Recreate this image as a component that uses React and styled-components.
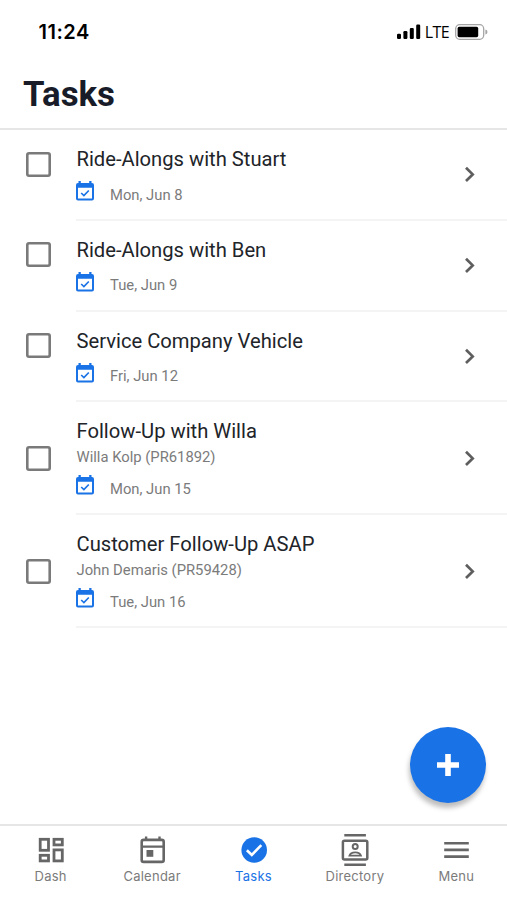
import React, { useState } from 'react'
import styled, { createGlobalStyle } from 'styled-components'

const colors = {
    blue: '#1a73e6',
    title: '#212429',
    heading: '#181c28',
    muted: '#7b7b7b',
    icon: '#666666',
    line: '#e6e6e6',
    rowLine: '#f4f4f4'
}

const tasks = [
    { id: 1, title: 'Ride-Alongs with Stuart', date: 'Mon, Jun 8' },
    { id: 2, title: 'Ride-Alongs with Ben', date: 'Tue, Jun 9' },
    { id: 3, title: 'Service Company Vehicle', date: 'Fri, Jun 12' },
    { id: 4, title: 'Follow-Up with Willa', contact: 'Willa Kolp (PR61892)', date: 'Mon, Jun 15' },
    { id: 5, title: 'Customer Follow-Up ASAP', contact: 'John Demaris (PR59428)', date: 'Tue, Jun 16' }
]

// status bar icons
const SignalIcon = () => (
    <svg width="24" height="16" viewBox="0 0 24 16" fill="#000">
        <rect x="0" y="9.7" width="4" height="5.3" rx="1.2" />
        <rect x="6.4" y="7" width="4" height="8" rx="1.2" />
        <rect x="12.8" y="3.9" width="4" height="11.1" rx="1.2" />
        <rect x="19.2" y="0.5" width="4" height="14.5" rx="1.2" />
    </svg>
)

const BatteryIcon = () => (
    <svg width="33" height="16" viewBox="0 0 33 16">
        <rect x="0.7" y="0.7" width="28" height="14.6" rx="4" fill="none" stroke="#a5a5a5" strokeWidth="1.3" />
        <rect x="2.6" y="2.8" width="20.6" height="10.4" rx="1.6" fill="#000" />
        <path d="M30.4 5.5c1.7.5 2 1.5 2 2.5s-.3 2-2 2.5z" fill="#a5a5a5" />
    </svg>
)

const EventIcon = () => (
    <svg width="18" height="20" viewBox="0 0 18 20">
        <path fill={colors.blue} fillRule="evenodd" d="M2.5 0h2.3v2h8.4V0h2.3v2H16a2 2 0 0 1 2 2v13.500a2 2 0 0 1-2 2H2a2 2 0 0 1-2-2V4a2 2 0 0 1 2-2h.5zM2 6.800v10.700h14V6.800z" />
        <path d="M5.200 12l2.700 2.500 4.900-5" fill="none" stroke={colors.blue} strokeWidth="1.7" />
    </svg>
)

const ChevronIcon = () => (
    <svg width="12" height="18" viewBox="0 0 12 18">
        <path d="M2 2.700L8.700 9.400 2 16" fill="none" stroke="#5e5e5e" strokeWidth="2.7" />
    </svg>
)

const PlusIcon = () => (
    <svg width="24" height="24" viewBox="0 0 24 24">
        <path d="M12 1v22M1 12h22" fill="none" stroke="#fff" strokeWidth="5.6" />
    </svg>
)

// tab icons
const DashIcon = () => (
    <svg width="26" height="34" viewBox="0 0 26 34" fill="none" stroke={colors.icon} strokeWidth="2.8">
        <rect x="2.2" y="6.3" width="8.3" height="11" />
        <rect x="16" y="6.3" width="8.3" height="5.6" />
        <rect x="2.2" y="22.3" width="8.3" height="5.6" />
        <rect x="16" y="16.9" width="8.3" height="11" />
    </svg>
)

const CalendarIcon = () => (
    <svg width="26" height="34" viewBox="0 0 26 34">
        <rect x="2.7" y="6.9" width="22" height="22" rx="2" fill="none" stroke={colors.icon} strokeWidth="2.6" />
        <path d="M2.7 13.6h22M7.100 3.400v4M20.500 3.400v4" fill="none" stroke={colors.icon} strokeWidth="2.4" />
        <rect x="7.5" y="17" width="6.8" height="6.8" fill={colors.icon} />
    </svg>
)

const CheckIcon = () => (
    <svg width="26" height="34" viewBox="0 0 26 34">
        <circle cx="13.2" cy="17" r="12.800" fill={colors.blue} />
        <path d="M5.900 17.200l4.900 4.800 9.500-9.900" fill="none" stroke="#fff" strokeWidth="2.6" />
    </svg>
)

const DirectoryIcon = () => (
    <svg width="28" height="34" viewBox="0 0 28 34" fill="none" stroke={colors.icon} strokeWidth="2.5">
        <path d="M3.3 2.2h21.6M3.3 31.8h21.6" />
        <rect x="1.9" y="7.8" width="24.4" height="18.6" rx="1.5" />
        <circle cx="14.2" cy="13.6" r="2.5" strokeWidth="2" />
        <path d="M8.400 22.700c.8-2.500 3.400-3.300 5.800-3.300s5 .8 5.800 3.300z" strokeWidth="1.8" />
    </svg>
)

const MenuIcon = () => (
    <svg width="26" height="34" viewBox="0 0 26 34">
        <path d="M1.200 10.200h24.600M1.200 16.900h24.600M1.200 23.600h24.600" fill="none" stroke={colors.icon} strokeWidth="2.6" />
    </svg>
)

const tabs = [
    { name: 'Dash', Icon: DashIcon },
    { name: 'Calendar', Icon: CalendarIcon },
    { name: 'Tasks', Icon: CheckIcon },
    { name: 'Directory', Icon: DirectoryIcon },
    { name: 'Menu', Icon: MenuIcon }
]

export default function App() {
    const [done, setDone] = useState([])

    const toggleTask = (id) => {
        setDone(done.includes(id) ? done.filter((d) => d !== id) : [...done, id])
    }

    return (
        <Screen>
            <GlobalStyle />
            <StatusBar>
                <Clock>11:24</Clock>
                <Signal>
                    <SignalIcon />
                    <Network>LTE</Network>
                    <BatteryIcon />
                </Signal>
            </StatusBar>
            <Header>
                <Heading>Tasks</Heading>
            </Header>
            <TaskList>
                {tasks.map((task) => (
                    <Task key={task.id}>
                        <CheckCell $centered={!!task.contact}>
                            <Checkbox
                                role="checkbox"
                                aria-label={task.title}
                                aria-checked={done.includes(task.id)}
                                $checked={done.includes(task.id)}
                                onClick={() => toggleTask(task.id)}
                            />
                        </CheckCell>
                        <TaskBody $tall={!!task.contact}>
                            <TaskInfo>
                                <TaskTitle>{task.title}</TaskTitle>
                                {task.contact && <Contact>{task.contact}</Contact>}
                                <DateRow>
                                    <EventIcon />
                                    <DateText>{task.date}</DateText>
                                </DateRow>
                            </TaskInfo>
                            <ChevronIcon />
                        </TaskBody>
                    </Task>
                ))}
            </TaskList>
            <AddButton aria-label="Add task">
                <PlusIcon />
            </AddButton>
            <TabBar>
                {tabs.map(({ name, Icon }) => (
                    <Tab key={name} $active={name === 'Tasks'}>
                        <Icon />
                        <TabLabel>{name}</TabLabel>
                    </Tab>
                ))}
            </TabBar>
        </Screen>
    )
}

const GlobalStyle = createGlobalStyle`
    * {
        box-sizing: border-box;
    }
    body {
        margin: 0;
        background: #fff;
        font-family: Roboto, "Liberation Sans", sans-serif;
    }
    svg {
        display: block;
        flex-shrink: 0;
    }
    button {
        padding: 0;
        border: 0;
        background: none;
        font: inherit;
    }
`
const Screen = styled.div`
    position: relative;
    display: flex;
    flex-direction: column;
    height: 100vh;
    overflow: hidden;
    background: #fff;
`
const StatusBar = styled.div`
    display: flex;
    align-items: center;
    justify-content: space-between;
    height: 64px;
    padding: 0 19px 0 38.5px;
    color: #000;
`
const Clock = styled.div`
    font-family: Inter, sans-serif;
    font-size: 20px;
    font-weight: 600;
    letter-spacing: .5px;
`
const Signal = styled.div`
    display: flex;
    align-items: center;
`
const Network = styled.div`
    margin: 0 6px 0 4px;
    font-family: "Open Sans", sans-serif;
    font-size: 16px;
    font-weight: 500;
    letter-spacing: -.6px;
`
const Header = styled.header`
    height: 66px;
    padding: 9.4px 23px 0;
    border-bottom: 2px solid ${colors.line};
`
const Heading = styled.h1`
    margin: 0;
    color: ${colors.heading};
    font-size: 34.8px;
    font-weight: 700;
    line-height: 42px;
`
const TaskList = styled.div`
    flex: 1;
`
// single task row
const Task = styled.div`
    display: flex;
`
const CheckCell = styled.div`
    display: flex;
    align-items: ${(props) => (props.$centered ? 'center' : 'flex-start')};
    width: 76px;
    padding: ${(props) => (props.$centered ? '0 0 0 26px' : '21.5px 0 0 26px')};
`
const Checkbox = styled.button`
    width: 25px;
    height: 25px;
    border-radius: 3px;
    background: ${(props) => (props.$checked ? colors.blue : '#fff')};
    box-shadow: inset 0 0 0 2.6px #7a7a7a;
`
const TaskBody = styled.div`
    display: flex;
    flex: 1;
    align-items: center;
    justify-content: space-between;
    height: ${(props) => (props.$tall ? '112.8px' : '90.8px')};
    padding-right: 31px;
    border-bottom: 2px solid ${colors.rowLine};
`
const TaskInfo = styled.div`
    align-self: flex-start;
    padding-top: 17px;
`
const TaskTitle = styled.div`
    padding-left: .5px;
    color: ${colors.title};
    font-size: 20.2px;
    line-height: 25px;
`
const Contact = styled.div`
    margin-bottom: -4px;
    padding-left: .5px;
    color: ${colors.muted};
    font-size: 14.8px;
    line-height: 26px;
`
const DateRow = styled.div`
    display: flex;
    align-items: flex-start;
    gap: 16px;
    margin-top: 9px;
`
const DateText = styled.div`
    padding-top: 3.5px;
    color: ${colors.muted};
    font-size: 14.8px;
    line-height: 20px;
`
const AddButton = styled.button`
    position: absolute;
    right: 21.5px;
    bottom: 97.5px;
    display: flex;
    align-items: center;
    justify-content: center;
    width: 76px;
    height: 76px;
    border-radius: 50%;
    background: ${colors.blue};
    box-shadow: -1px 5px 5px rgba(0, 0, 0, .26);
`
// bottom navigation
const TabBar = styled.nav`
    display: flex;
    height: 76px;
    border-top: 2px solid ${colors.line};
`
const Tab = styled.button`
    display: flex;
    flex: 1;
    flex-direction: column;
    align-items: center;
    padding-top: 7px;
    color: ${(props) => (props.$active ? colors.blue : colors.muted)};
`
const TabLabel = styled.span`
    font-family: Inter, sans-serif;
    font-size: 13px;
    letter-spacing: .25px;
    line-height: 18px;
`
